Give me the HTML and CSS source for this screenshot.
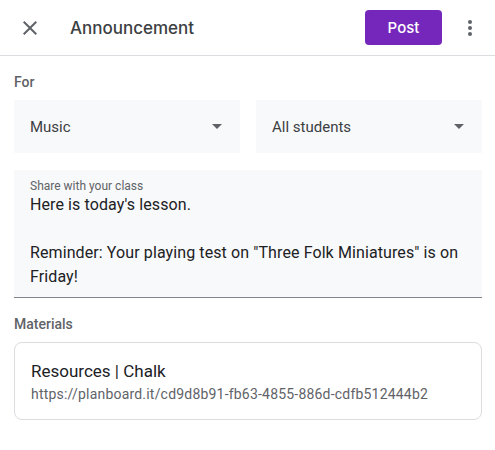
FILE: index.html
```html
<!DOCTYPE html>
<html>
<head>
<meta charset="utf-8">
<link rel="stylesheet" href="styles.css">
</head>
<body>
<div class="page">
  <header class="topbar">
    <button class="icon-btn close" aria-label="Close">
      <svg width="24" height="24" viewBox="0 0 24 24"><path d="M19 6.41 17.59 5 12 10.59 6.41 5 5 6.41 10.59 12 5 17.59 6.41 19 12 13.41 17.59 19 19 17.59 13.41 12z" fill="#5f6368"/></svg>
    </button>
    <h1 class="title">Announcement</h1>
    <button class="post">Post</button>
    <button class="icon-btn more" aria-label="More">
      <svg width="24" height="24" viewBox="0 0 24 24"><circle cx="12" cy="6" r="2" fill="#5f6368"/><circle cx="12" cy="12" r="2" fill="#5f6368"/><circle cx="12" cy="18" r="2" fill="#5f6368"/></svg>
    </button>
  </header>
  <main class="content">
    <div class="label">For</div>
    <div class="selects">
      <div class="select"><span>Music</span><span class="caret"></span></div>
      <div class="select"><span>All students</span><span class="caret"></span></div>
    </div>
    <div class="textarea">
      <div class="ta-label">Share with your class</div>
      <div class="ta-text">Here is today's lesson.<br><br>Reminder: Your playing test on "Three Folk Miniatures" is on Friday!</div>
    </div>
    <div class="label materials-label">Materials</div>
    <div class="card">
      <div class="card-title">Resources | Chalk</div>
      <div class="card-url">https://planboard.it/cd9d8b91-fb63-4855-886d-cdfb512444b2</div>
    </div>
  </main>
</div>
</body>
</html>
```
FILE: styles.css
```css
* { box-sizing: border-box; }
body {
  margin: 0;
  font-family: Roboto, "Liberation Sans", Arial, sans-serif;
  color: #202124;
  background: #fff;
}
.topbar {
  display: flex;
  align-items: center;
  height: 56px;
  border-bottom: 1px solid #dadce0;
  padding: 0 13px 0 18px;
}
.icon-btn {
  border: 0;
  background: none;
  padding: 0;
  width: 24px;
  height: 24px;
  display: flex;
  align-items: center;
  justify-content: center;
  cursor: pointer;
}
.title {
  flex: 1;
  margin: 0 0 0 28px;
  font-size: 17px;
  font-weight: 500;
  color: #3c4043;
  font-family: Inter, Roboto, sans-serif;
  letter-spacing: 0;
}
.post {
  width: 77px;
  height: 35px;
  border: 0;
  border-radius: 4px;
  background: #7627bb;
  color: #fff;
  font-family: Inter, Roboto, sans-serif;
  font-size: 15px;
  font-weight: 500;
  margin-right: 16px;
}
.content {
  padding: 17px 13px 0 14px;
}
.label {
  font-size: 14px;
  font-weight: 500;
  color: #5f6368;
  line-height: 18px;
}
.selects {
  display: grid;
  grid-template-columns: 1fr 1fr;
  gap: 16px;
  margin-top: 9px;
}
.select {
  height: 53px;
  background: #f8f9fa;
  display: flex;
  align-items: center;
  justify-content: space-between;
  padding: 0 18px 0 16px;
  font-size: 15px;
  color: #3c4043;
}
.caret {
  width: 0;
  height: 0;
  border-left: 5px solid transparent;
  border-right: 5px solid transparent;
  border-top: 5px solid #5f6368;
}
.textarea {
  margin-top: 17px;
  background: #f8f9fa;
  border-bottom: 1px solid #80868b;
  padding: 9px 16px 4px 16px;
  height: 128px;
}
.ta-label {
  font-size: 12px;
  color: #5f6368;
  line-height: 14px;
}
.ta-text {
  font-size: 16px;
  line-height: 24px;
  color: #202124;
  letter-spacing: 0.1px;
}
.materials-label {
  margin-top: 17px;
}
.card {
  margin-top: 9px;
  border: 1px solid #dadce0;
  border-radius: 8px;
  height: 78px;
  padding: 17px 16px 0 16px;
}
.card-title {
  font-size: 17px;
  color: #202124;
  line-height: 22px;
}
.card-url {
  font-size: 14px;
  color: #5f6368;
  line-height: 20px;
  margin-top: 2px;
  letter-spacing: 0.2px;
}
```
